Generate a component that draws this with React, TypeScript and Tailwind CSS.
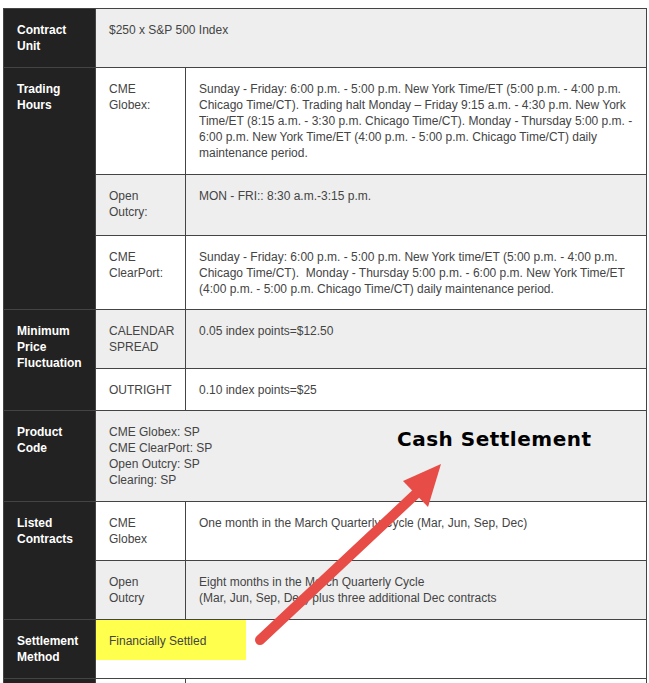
import React from "react";

const td = "border border-[#444] align-top px-[13px] pt-[13px] text-[12px] leading-[16px] text-[#444]";
const th = "border border-[#444] align-top px-[13px] pt-[13px] text-[12px] leading-[16px] text-white font-bold bg-[#222] w-[92px]";

export default function App() {
  return (
    <div className="relative w-[649px] h-[683px] overflow-hidden bg-white" style={{ fontFamily: '"Liberation Sans", Arial, sans-serif' }}>
      <div className="pt-[8px] pl-[3px]">
        <table className="border-collapse w-[644px] table-fixed">
          <colgroup>
            <col className="w-[92px]" />
            <col className="w-[90px]" />
            <col />
          </colgroup>
          <tbody>
            <tr className="h-[59px]">
              <td className={th}>Contract<br />Unit</td>
              <td colSpan={2} className={`${td} bg-[#eee]`}>$250 x S&amp;P 500 Index</td>
            </tr>
            <tr className="h-[107px]">
              <td rowSpan={3} className={th}>Trading<br />Hours</td>
              <td className={`${td} bg-white`}>CME<br />Globex:</td>
              <td className={`${td} bg-white`}>Sunday - Friday: 6:00 p.m. - 5:00 p.m. New York Time/ET (5:00 p.m. - 4:00 p.m. Chicago Time/CT). Trading halt Monday – Friday 9:15 a.m. - 4:30 p.m. New York Time/ET (8:15 a.m. - 3:30 p.m. Chicago Time/CT). Monday - Thursday 5:00 p.m. - 6:00 p.m. New York Time/ET (4:00 p.m. - 5:00 p.m. Chicago Time/CT) daily maintenance period.</td>
            </tr>
            <tr className="h-[61px]">
              <td className={`${td} bg-[#eee]`}>Open<br />Outcry:</td>
              <td className={`${td} bg-[#eee]`}>MON - FRI:: 8:30 a.m.-3:15 p.m.</td>
            </tr>
            <tr className="h-[74px]">
              <td className={`${td} bg-white`}>CME<br />ClearPort:</td>
              <td className={`${td} bg-white`}>Sunday - Friday: 6:00 p.m. - 5:00 p.m. New York time/ET (5:00 p.m. - 4:00 p.m. Chicago Time/CT).&nbsp; Monday - Thursday 5:00 p.m. - 6:00 p.m. New York Time/ET (4:00 p.m. - 5:00 p.m. Chicago Time/CT) daily maintenance period.</td>
            </tr>
            <tr className="h-[59px]">
              <td rowSpan={2} className={th}>Minimum<br />Price<br />Fluctuation</td>
              <td className={`${td} bg-[#eee]`}>CALENDAR<br />SPREAD</td>
              <td className={`${td} bg-[#eee]`}>0.05 index points=$12.50</td>
            </tr>
            <tr className="h-[42px]">
              <td className={`${td} bg-white`}>OUTRIGHT</td>
              <td className={`${td} bg-white`}>0.10 index points=$25</td>
            </tr>
            <tr className="h-[91px]">
              <td className={th}>Product<br />Code</td>
              <td colSpan={2} className={`${td} bg-[#eee]`}>CME Globex: SP<br />CME ClearPort: SP<br />Open Outcry: SP<br />Clearing: SP</td>
            </tr>
            <tr className="h-[59px]">
              <td rowSpan={2} className={th}>Listed<br />Contracts</td>
              <td className={`${td} bg-white`}>CME<br />Globex</td>
              <td className={`${td} bg-white`}>One month in the March Quarterly Cycle (Mar, Jun, Sep, Dec)</td>
            </tr>
            <tr className="h-[59px]">
              <td className={`${td} bg-[#eee]`}>Open<br />Outcry</td>
              <td className={`${td} bg-[#eee]`}>Eight months in the March Quarterly Cycle<br />(Mar, Jun, Sep, Dec) plus three additional Dec contracts</td>
            </tr>
            <tr className="h-[59px]">
              <td className={th}>Settlement<br />Method</td>
              <td colSpan={2} className="border border-[#444] align-top p-0 bg-white text-[12px] leading-[16px] text-[#444]">
                <div className="w-[150px] h-[40px] bg-[#ffff4d] px-[13px] pt-[13px]">Financially Settled</div>
              </td>
            </tr>
            <tr className="h-[30px]">
              <td className={th}></td>
              <td className={`${td} bg-white`}></td>
              <td className={`${td} bg-white`}></td>
            </tr>
          </tbody>
        </table>
      </div>
      <div className="absolute left-[397px] top-[424px] text-[20px] tracking-[0.5px] font-bold text-black" style={{ fontFamily: '"DejaVu Sans", Verdana, sans-serif' }}>Cash Settlement</div>
      <svg className="absolute left-0 top-0" width="649" height="683">
        <line x1="260" y1="640" x2="420" y2="490" stroke="#e84c47" strokeWidth="10" strokeLinecap="round" />
        <polygon points="441,464 403,481 428,507" fill="#e84c47" />
      </svg>
    </div>
  );
}
